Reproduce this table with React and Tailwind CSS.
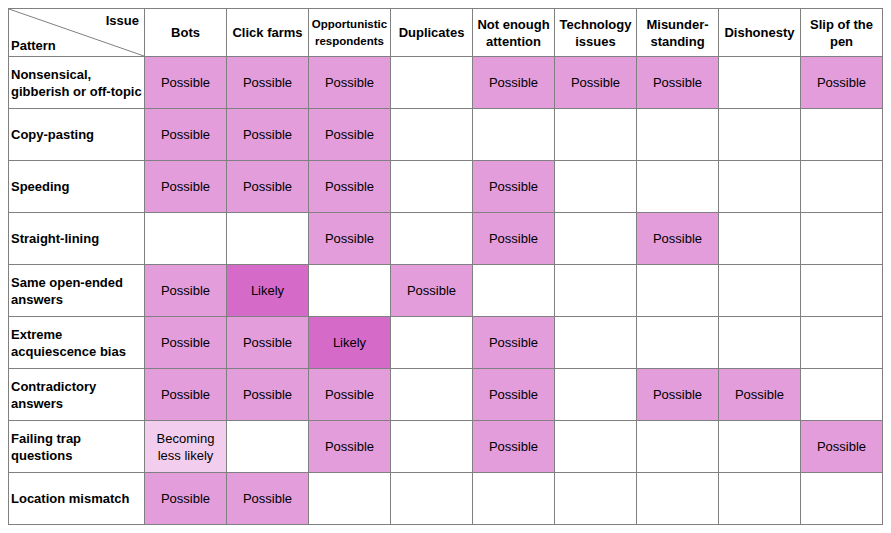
import React from 'react';

const P = 'p';
const L = 'l';
const B = 'b';

const issues = [
  { lines: ['Bots'] },
  { lines: ['Click farms'] },
  { lines: ['Opportunistic', 'respondents'], small: true },
  { lines: ['Duplicates'] },
  { lines: ['Not enough', 'attention'] },
  { lines: ['Technology', 'issues'] },
  { lines: ['Misunder-', 'standing'] },
  { lines: ['Dishonesty'] },
  { lines: ['Slip of the', 'pen'] },
];

const rows = [
  { label: ['Nonsensical,', 'gibberish or off-topic'], cells: [P, P, P, null, P, P, P, null, P] },
  { label: ['Copy-pasting'], cells: [P, P, P, null, null, null, null, null, null] },
  { label: ['Speeding'], cells: [P, P, P, null, P, null, null, null, null] },
  { label: ['Straight-lining'], cells: [null, null, P, null, P, null, P, null, null] },
  { label: ['Same open-ended', 'answers'], cells: [P, L, null, P, null, null, null, null, null] },
  { label: ['Extreme', 'acquiescence bias'], cells: [P, P, L, null, P, null, null, null, null] },
  { label: ['Contradictory', 'answers'], cells: [P, P, P, null, P, null, P, P, null] },
  { label: ['Failing trap', 'questions'], cells: [B, null, P, null, P, null, null, null, P] },
  { label: ['Location mismatch'], cells: [P, P, null, null, null, null, null, null, null] },
];

const Cell = ({ kind }) => {
  if (kind === P) {
    return <div className="flex items-center justify-center bg-[#e39ddb]">Possible</div>;
  }
  if (kind === L) {
    return <div className="flex items-center justify-center bg-[#d66ac9]">Likely</div>;
  }
  if (kind === B) {
    return (
      <div className="flex flex-col items-center justify-center bg-[#f2cdee]">
        <span>Becoming</span>
        <span>less likely</span>
      </div>
    );
  }
  return <div className="bg-white"></div>;
};

export default function App() {
  return (
    <div className="min-h-[533px] w-[891px] bg-white pl-2 pt-2" style={{ fontFamily: '"Liberation Sans", Arial, sans-serif' }}>
      <div className="grid w-[875px] grid-cols-[135px_repeat(9,81px)] grid-rows-[47px_repeat(9,51px)] gap-px bg-[#808080] p-px text-[13px] leading-[17px] text-black">
        <div className="relative bg-white font-bold">
          <svg className="absolute inset-0" width="135" height="47" viewBox="0 0 135 47">
            <line x1="0" y1="0" x2="135" y2="47" stroke="#808080" strokeWidth="1" />
          </svg>
          <span className="absolute right-[5px] top-[3px]">Issue</span>
          <span className="absolute bottom-[2px] left-[2px]">Pattern</span>
        </div>
        {issues.map((h, i) => (
          <div
            key={i}
            className={`flex flex-col items-center justify-center bg-white text-center font-bold ${h.small ? 'text-[11.5px]' : ''}`}
          >
            {h.lines.map((t) => (
              <span key={t} className="whitespace-nowrap">{t}</span>
            ))}
          </div>
        ))}
        {rows.map((r, ri) => (
          <React.Fragment key={ri}>
            <div className="flex flex-col justify-center bg-white pl-[2px] font-bold">
              {r.label.map((t) => (
                <span key={t} className="whitespace-nowrap">{t}</span>
              ))}
            </div>
            {r.cells.map((c, ci) => (
              <Cell key={ci} kind={c} />
            ))}
          </React.Fragment>
        ))}
      </div>
    </div>
  );
}
